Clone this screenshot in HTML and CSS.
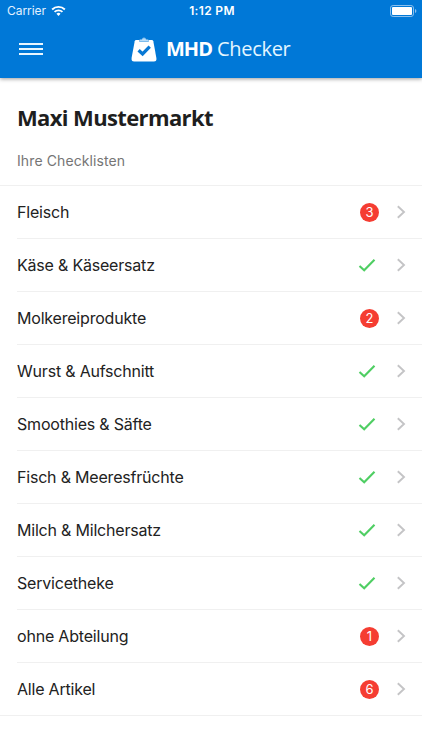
FILE: index.html
```html
<!DOCTYPE html>
<html lang="de">
<head>
<meta charset="utf-8">
<title>MHD Checker</title>
<link rel="stylesheet" href="styles.css">
</head>
<body>
<svg class="defs" width="0" height="0">
  <symbol id="chevron" viewBox="0 0 10 14"><path d="M1.8 1.200 8 7 1.800 12.800" fill="none" stroke="#c4c4c6" stroke-width="1.900"/></symbol>
  <symbol id="check" viewBox="0 0 18 14"><path d="M1.500 8 6.200 12.300 16.500 1.700" fill="none" stroke="#4fce63" stroke-width="2.100"/></symbol>
</svg>
<header class="header">
  <div class="status">
    <div class="carrier"><span>Carrier</span>
      <svg class="wifi" viewBox="0 0 16 12"><path d="M1.2 4.400a9.700 9.700 0 0 1 13.600 0M3.800 7a6 6 0 0 1 8.400 0" fill="none" stroke="#fff" stroke-width="2"/><path d="M5.800 8.900a3.100 3.100 0 0 1 4.400 0L8 11.400z" fill="#fff"/></svg>
    </div>
    <span class="time">1:12 PM</span>
    <svg class="battery" viewBox="0 0 27 12"><rect x=".5" y=".5" width="23" height="11" rx="2.600" fill="none" stroke="#8bc0ee"/><rect x="2" y="2" width="20" height="8" rx="1" fill="#fff"/><path d="M25 4v4q1.400-.6 1.400-2T25 4" fill="#8bc0ee"/></svg>
  </div>
  <div class="toolbar">
    <svg class="menu" viewBox="0 0 24 14"><path d="M0 2h24M0 7h24M0 12h24" stroke="#e8f6ff" stroke-width="2"/></svg>
    <div class="brand">
      <svg class="logo" viewBox="0 0 26 25"><path d="M5.200 3h15.600q1.200 0 1.500 1.200L25.400 21q.5 3.500-2.500 3.500H3.100Q.1 24.500.6 21L3.700 4.200Q4 3 5.200 3z" fill="#fff"/><path d="M8.500 4.500v-1q0-1 1.200-1h1.100a2.300 2.300 0 0 1 4.400 0h1.100q1.200 0 1.200 1v1z" fill="#b9dcf8" stroke="#65aee9" stroke-width=".8"/><path d="m7.600 13.200 4 3.700 7.100-7.200" fill="none" stroke="#0878d4" stroke-width="3.300"/></svg>
      <span class="name"><b>MHD</b><span class="light">Checker</span></span>
    </div>
  </div>
</header>
<main>
  <h1>Maxi Mustermarkt</h1>
  <h2>Ihre Checklisten</h2>
  <ul class="list">
    <li><span class="label">Fleisch</span><span class="badge">3</span><svg class="chevron"><use href="#chevron"/></svg></li>
    <li><span class="label">Käse &amp; Käseersatz</span><svg class="check"><use href="#check"/></svg><svg class="chevron"><use href="#chevron"/></svg></li>
    <li><span class="label">Molkereiprodukte</span><span class="badge">2</span><svg class="chevron"><use href="#chevron"/></svg></li>
    <li><span class="label">Wurst &amp; Aufschnitt</span><svg class="check"><use href="#check"/></svg><svg class="chevron"><use href="#chevron"/></svg></li>
    <li><span class="label">Smoothies &amp; Säfte</span><svg class="check"><use href="#check"/></svg><svg class="chevron"><use href="#chevron"/></svg></li>
    <li><span class="label">Fisch &amp; Meeresfrüchte</span><svg class="check"><use href="#check"/></svg><svg class="chevron"><use href="#chevron"/></svg></li>
    <li><span class="label">Milch &amp; Milchersatz</span><svg class="check"><use href="#check"/></svg><svg class="chevron"><use href="#chevron"/></svg></li>
    <li><span class="label">Servicetheke</span><svg class="check"><use href="#check"/></svg><svg class="chevron"><use href="#chevron"/></svg></li>
    <li><span class="label">ohne Abteilung</span><span class="badge">1</span><svg class="chevron"><use href="#chevron"/></svg></li>
    <li><span class="label">Alle Artikel</span><span class="badge">6</span><svg class="chevron"><use href="#chevron"/></svg></li>
  </ul>
</main>
</body>
</html>
```
FILE: styles.css
```css
* { box-sizing: border-box; }
body { margin: 0; height: 750px; overflow: hidden; background: #fff; color: #222; font-family: Inter, sans-serif; }
svg { display: block; flex: none; }
.defs { position: absolute; }
.header { height: 78px; background: #0078d7; color: #fff; box-shadow: 0 1px 4px rgba(0,0,0,.4); }
.status { height: 21px; display: grid; grid-template-columns: 1fr auto 1fr; align-items: center; padding: 0 5px 0 7px; font-size: 12px; }
.carrier { display: flex; align-items: center; gap: 5px; color: #e2f1ff; letter-spacing: -.05px; }
.wifi { width: 15px; height: 12px; }
.time { font-weight: 600; letter-spacing: .35px; }
.battery { width: 27px; height: 12px; justify-self: end; }
.toolbar { height: 57px; display: grid; grid-template-columns: 112px 1fr; align-items: center; padding: 0 19px 1px; }
.menu { width: 24px; height: 14px; }
.brand { display: flex; align-items: center; gap: 9px; }
.logo { width: 26px; height: 25px; }
.name { display: flex; gap: 5px; font: 20px/28px "Open Sans", sans-serif; }
.name b { letter-spacing: -1px; }
.light { color: #e4f6ff; letter-spacing: -.3px; }
h1 { margin: 23px 0 0 17px; font: 700 22px/32px "Open Sans", sans-serif; letter-spacing: -.63px; color: #1e1e1e; white-space: nowrap; }
h2 { margin: 18px 0 0 17px; font-size: 14px; line-height: 20px; font-weight: 400; letter-spacing: .1px; color: #757575; }
.list { list-style: none; margin: 14px 0 0; padding: 0; border-top: 1px solid #f0f0f0; border-bottom: 1px solid #f0f0f0; }
li { height: 53px; margin-left: 17px; padding-right: 16px; display: flex; align-items: center; border-bottom: 1px solid #f0f0f0; font-size: 16px; letter-spacing: -.2px; }
li:last-child { height: 52px; border-bottom: 0; }
.label { margin-right: auto; white-space: nowrap; }
.badge { width: 19px; height: 19px; border-radius: 50%; background: #f53d32; color: #fff; font-size: 13px; line-height: 19px; letter-spacing: 0; text-align: center; margin-right: 17px; }
.check { width: 18px; height: 14px; margin-right: 20px; }
.chevron { width: 10px; height: 14px; }
```
